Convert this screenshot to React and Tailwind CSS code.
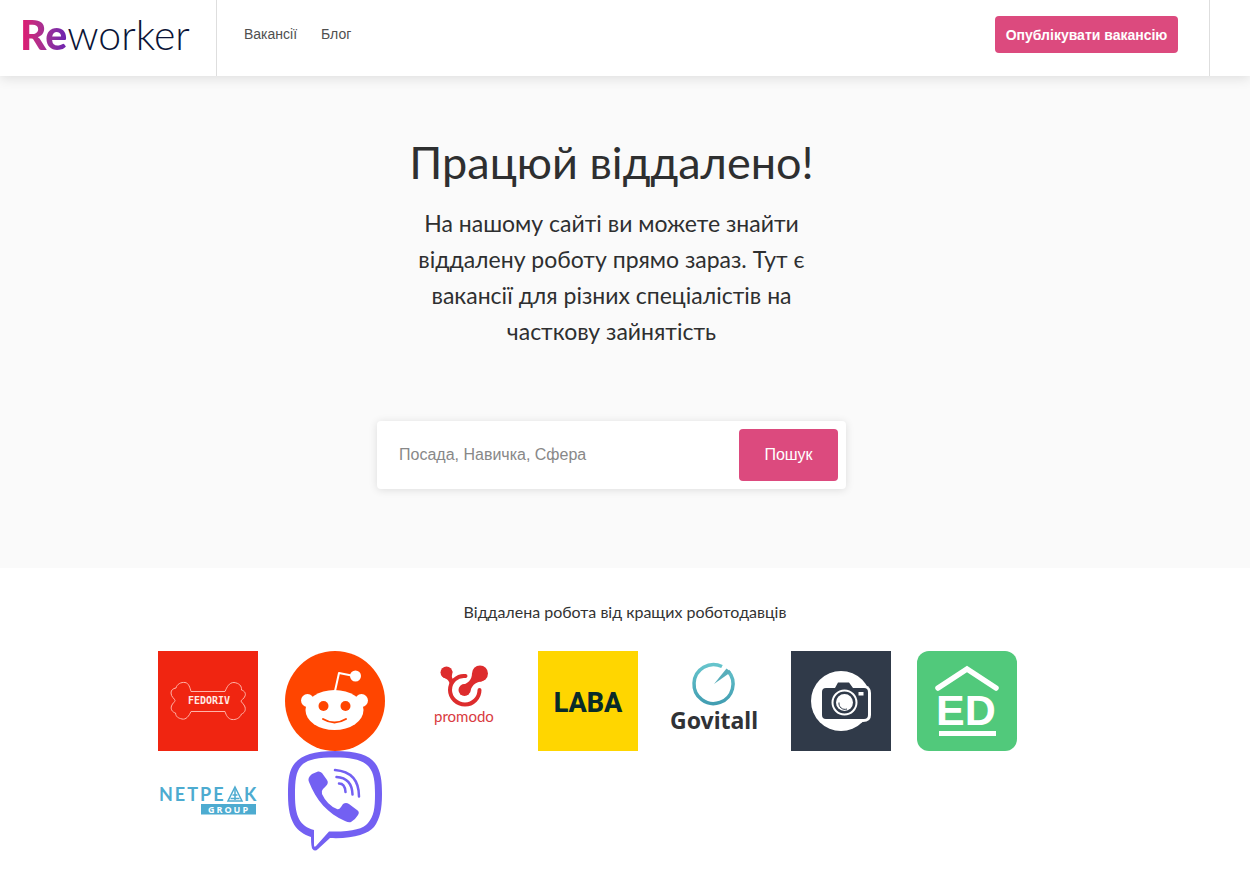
import { useState } from "react";

const navLinks = [
	{ label: "Вакансії", href: "#jobs" },
	{ label: "Блог", href: "#blog" },
];

function FedorivLogo() {
	return (
		<svg viewBox="0 0 100 100" className="w-full h-full" role="img" aria-label="Fedoriv">
			<rect width="100" height="100" fill="#f02511" />
			<path
				d="M33 40.500H67C69 36 71 31.500 76 31.500C81 32 84 35 83.500 39C87 40 88 43 87 45C86 48 83 49 83 50C83 51 86 53 87 56C88 60 86 62 83.500 63C82 67 78 69 74 68.500C70 68 68 64 67 60.500H33C31 65 28 69 24 68C20 67 18 66 17.500 62C14 61 12.500 58 13.500 55C14.500 52 17 51 17 49.500C17 48 13 46 13 42C13 39 15 37.500 18 37C19 33 23 31 27 31.500C31 32 32 37 33 40.500Z"
				fill="none"
				stroke="#ffb3a8"
				strokeWidth="1"
			/>
			<text x="30" y="53" fontSize="10" fontWeight="700" fontFamily="'DejaVu Sans Mono', monospace" fill="#ffe9e4">
				FEDORIV
			</text>
		</svg>
	);
}

function RedditLogo() {
	return (
		<svg viewBox="0 0 100 100" className="w-full h-full" role="img" aria-label="Reddit">
			<circle cx="50" cy="50" r="50" fill="#ff4500" />
			<path d="M50 40L54 22L69 25" fill="none" stroke="#fff" strokeWidth="2" strokeLinejoin="round" />
			<circle cx="70.500" cy="25" r="5.500" fill="#fff" />
			<circle cx="22.500" cy="49.500" r="6.500" fill="#fff" />
			<circle cx="76.500" cy="49.500" r="6.500" fill="#fff" />
			<ellipse cx="49.500" cy="59" rx="29" ry="20" fill="#fff" />
			<circle cx="38.500" cy="55" r="5" fill="#ff4500" />
			<circle cx="60.500" cy="55" r="5" fill="#ff4500" />
			<path d="M38 68Q49.500 75 61 68" fill="none" stroke="#ff4500" strokeWidth="2" strokeLinecap="round" />
		</svg>
	);
}

function PromodoLogo() {
	return (
		<svg viewBox="0 0 100 100" className="w-full h-full" role="img" aria-label="Promodo">
			<g fill="#dd2c2d">
				<circle cx="35.500" cy="21.500" r="6" />
				<circle cx="69" cy="22.500" r="8" />
				<circle cx="53.500" cy="39" r="6" />
				<path d="M61 22C61 29 57 33 50 34L59 42C60 35 64 31 71 30.500Z" />
				<path d="M32 26.500C37 28 38 30 39 34L45 29C41 29 40 26 41.500 20Z" />
			</g>
			<path d="M54.500 25C46 24 39 31 39 39C39 47 46 53.500 54 53.500C62 53.500 68.500 47 68.500 39" fill="none" stroke="#dd2c2d" strokeWidth="4" strokeLinecap="round" />
			<text x="23" y="71" fontSize="15" fontFamily="Lato, sans-serif" fill="#d93a40">
				promodo
			</text>
		</svg>
	);
}

function LabaLogo() {
	return (
		<svg viewBox="0 0 100 100" className="w-full h-full" role="img" aria-label="Laba">
			<rect width="100" height="100" fill="#ffd600" />
			<text x="50" y="61" textAnchor="middle" fontSize="27" fontWeight="800" fontFamily="Roboto, sans-serif" fill="#092b29">
				LABA
			</text>
		</svg>
	);
}

function GovitallLogo() {
	return (
		<svg viewBox="0 0 100 100" className="w-full h-full" role="img" aria-label="Govitall">
			<defs>
				<linearGradient id="govitall-ring" x1="0" y1="0" x2="0" y2="1">
					<stop offset="0" stopColor="#66c4cc" />
					<stop offset="1" stopColor="#429eb2" />
				</linearGradient>
			</defs>
			<path d="M58 15.500A19.500 19.500 0 1 0 64 20" fill="none" stroke="url(#govitall-ring)" strokeWidth="3.500" />
			<path d="M62.500 17.500L50 33L67 21Z" fill="#58aebb" />
			<text x="6" y="78" fontSize="23" fontWeight="700" fontFamily="'Noto Sans', sans-serif" fill="#303236">
				Govitall
			</text>
		</svg>
	);
}

function CameraLogo() {
	return (
		<svg viewBox="0 0 100 100" className="w-full h-full" role="img" aria-label="Camera">
			<rect width="100" height="100" fill="#303a49" />
			<circle cx="50" cy="50" r="30" fill="#fff" />
			<path d="M43 34H74Q80 36 80 42V64Q80 71 72 71H64Z" fill="#fff" />
			<path d="M35 37H44L47 31.500H58L62 37H73Q77 37 77 41V64Q77 68 73 68H35Q31 68 31 64V41Q31 37 35 37Z" fill="#303a49" />
			<circle cx="53.500" cy="51.500" r="12" fill="none" stroke="#fff" strokeWidth="2" />
			<circle cx="53.500" cy="51.500" r="8.500" fill="#fff" />
			<path d="M48 51.500A6 6 0 0 0 56 58" fill="none" stroke="#303a49" strokeWidth="1" />
			<rect x="67.500" y="41" width="5" height="3.500" fill="#fff" />
		</svg>
	);
}

function EdLogo() {
	return (
		<svg viewBox="0 0 100 100" className="w-full h-full" role="img" aria-label="ED">
			<rect width="100" height="100" rx="12" fill="#51c97b" />
			<path d="M21 37L50 18L79 37" fill="none" stroke="#fff" strokeWidth="5.500" strokeLinecap="round" />
			<text x="19" y="74" fontSize="43" fontWeight="700" fontFamily="'Liberation Sans', sans-serif" fill="#fff">
				ED
			</text>
			<rect x="22" y="80" width="57" height="5" fill="#fff" />
		</svg>
	);
}

function NetpeakLogo() {
	return (
		<svg viewBox="0 0 100 100" className="w-full h-full" role="img" aria-label="Netpeak Group">
			<g fill="#4dabd0" fontFamily="Lato, sans-serif" fontWeight="700" fontSize="18">
				<text x="1" y="50" letterSpacing="2">
					NETPE
				</text>
				<text x="86" y="50">
					K
				</text>
			</g>
			<path d="M77 36L84 50H70Z" fill="none" stroke="#4dabd0" strokeWidth="1.500" />
			<path d="M77 38V49M74.500 44H79.500M72.500 47.500H81.500" stroke="#4dabd0" strokeWidth="1.500" />
			<rect x="43" y="53" width="55" height="10.500" fill="#4dabd0" />
			<text x="50" y="61.500" fontFamily="'Open Sans', sans-serif" fontWeight="700" fontSize="9" letterSpacing="2" fill="#fff">
				GROUP
			</text>
		</svg>
	);
}

function ViberLogo() {
	return (
		<svg viewBox="0 0 100 100" className="w-full h-full" role="img" aria-label="Viber">
			<path
				fillRule="evenodd"
				fill="#7360f2"
				d="M50 0C72 0 84 4 90 12C96 20 97 30 97 43C97 58 95 68 89 76C83 83 68 88 45 87L33 98Q30 101 27.500 98Q26 96 26 86C12 81 3 72 3 44C3 28 4 19 10 12C17 4 29 0 50 0ZM50 6.500C31 6.500 21 9 16 15C11 21 10 29 10 44C10 66 15 75 29 79V94Q29 97 31 95L44 80.500C67 81 78 78 83 72C89 65 90 57 90 43C90 31 89 22 84 16C78 9 67 6.500 50 6.500Z"
			/>
			<path
				fill="#7360f2"
				d="M27 23L33 20.500Q35 20 37 22L42 29Q44 32 41 35L38 38Q36 40 37 43Q42 54 52 58Q54 59 56 56L58 53Q61 51 64 53L72 59Q75 61 73 64Q70 69 66 71Q64 72 60 70C43 63 31 49 24 31Q22 27 27 23Z"
			/>
			<path d="M54 32.500Q60 32.500 60.500 41M51.500 26Q67 27 67.500 43.500M50 19Q74 21 74 45.500" fill="none" stroke="#7360f2" strokeWidth="2.500" strokeLinecap="round" />
		</svg>
	);
}

const employers = [
	{ name: "fedoriv", Logo: FedorivLogo },
	{ name: "reddit", Logo: RedditLogo },
	{ name: "promodo", Logo: PromodoLogo },
	{ name: "laba", Logo: LabaLogo },
	{ name: "govitall", Logo: GovitallLogo },
	{ name: "camera", Logo: CameraLogo },
	{ name: "ed", Logo: EdLogo },
	{ name: "netpeak", Logo: NetpeakLogo },
	{ name: "viber", Logo: ViberLogo },
];

function Header() {
	return (
		<header className="relative z-10 flex h-[76px] bg-white shadow-[0_2px_12px_rgba(0,0,0,0.12)]">
			<a href="#home" className="flex w-[217px] shrink-0 items-center border-r border-[#dedede] pl-5 pb-2 font-['Lato'] text-[41px] leading-none text-[#0b1437]">
				<span className="bg-gradient-to-r from-[#e5106c] to-[#6c1fb0] bg-clip-text font-black text-transparent">Re</span>
				<span className="font-light">worker</span>
			</a>
			<nav className="flex flex-1 items-center gap-6 pl-[27px] pb-2 text-sm text-[#505050]">
				{navLinks.map((link) => (
					<a key={link.href} href={link.href} className="hover:text-black">
						{link.label}
					</a>
				))}
			</nav>
			<div className="mr-10 border-r border-[#dedede] pt-4 pr-[31px]">
				<button type="button" className="h-[37px] w-[183px] cursor-pointer whitespace-nowrap rounded-sm bg-[#dc4a7e] text-sm font-bold text-white">
					Опублікувати вакансію
				</button>
			</div>
		</header>
	);
}

function Hero() {
	const [query, setQuery] = useState("");

	return (
		<section className="flex flex-col items-center bg-[#fafafa] pt-14 pr-[27px] pb-[79px] text-center text-[#2e2f30]">
			<h1 className="font-['Lato'] text-[45px] leading-[60px]">Працюй віддалено!</h1>
			<p className="mt-[13px] w-[400px] font-['Lato'] text-[23px] leading-9">
				На нашому сайті ви можете знайти віддалену роботу прямо зараз. Тут є вакансії для різних спеціалістів на часткову зайнятість
			</p>

			<form
				onSubmit={(e) => e.preventDefault()}
				className="mt-[72px] flex w-full max-w-[469px] rounded-sm bg-white p-2 shadow-[0_1px_8px_rgba(0,0,0,0.12)]"
			>
				<input
					type="text"
					value={query}
					onChange={(e) => setQuery(e.target.value)}
					placeholder="Посада, Навичка, Сфера"
					aria-label="Посада, Навичка, Сфера"
					className="min-w-0 flex-1 px-3.5 text-base text-[#333] outline-none placeholder:text-[#888]"
				/>
				<button type="submit" className="h-[52px] w-[99px] cursor-pointer rounded-sm bg-[#dc4a7e] text-base text-white">
					Пошук
				</button>
			</form>
		</section>
	);
}

export default function App() {
	return (
		<div className="min-h-screen bg-white font-['Liberation_Sans',sans-serif]">
			<Header />
			<main>
				<Hero />
				<section className="pt-8">
					<h2 className="text-center font-['Lato'] text-base leading-6 text-[#333]">Віддалена робота від кращих роботодавців</h2>
					{/* Employer logos */}
					<div className="mx-auto mt-[27px] max-w-[934px]">
						<ul className="grid max-w-[886px] grid-cols-7">
							{employers.map(({ name, Logo }) => (
								<li key={name} className="h-[100px] w-[100px]">
									<Logo />
								</li>
							))}
						</ul>
					</div>
				</section>
			</main>
		</div>
	);
}
